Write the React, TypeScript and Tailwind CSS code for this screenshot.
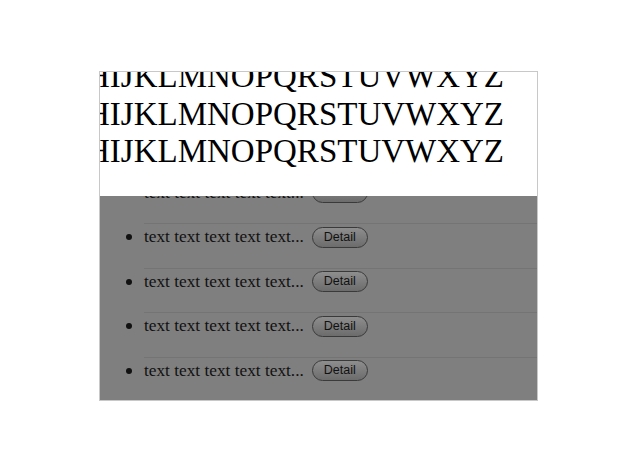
const ALPHABET = 'ABCDEFGHIJKLMNOPQRSTUVWXYZ';

const items = [1, 2, 3, 4, 5];

export default function App() {
  return (
    <div className="w-[640px] h-[476px] bg-white pt-[71px] pl-[99px]">
      <div className="w-[439px] h-[330px] border border-[#c8c8c8] flex flex-col overflow-hidden">
        {/* header: text scrolled both ways */}
        <div className="h-[124px] bg-white overflow-hidden shrink-0">
          <div
            className="mt-[-14px] ml-[-168px] whitespace-nowrap text-black text-[33px] leading-[37.5px]"
            style={{ fontFamily: '"Liberation Serif", "Times New Roman", serif' }}
          >
            <div>{ALPHABET}</div>
            <div>{ALPHABET}</div>
            <div>{ALPHABET}</div>
          </div>
        </div>

        {/* dimmed list */}
        <div className="flex-1 bg-[#7f7f7f] overflow-hidden">
          <ul className="mt-[-16.5px]">
            {items.map((i) => (
              <li key={i} className="flex">
                <div className="w-[44px] shrink-0 flex justify-end pr-[12px] pt-[10px]">
                  <span className="w-[6px] h-[6px] rounded-full bg-[#111]" />
                </div>
                <div className="flex-1 border-b border-[#747474] pt-[2.5px] pb-[20px]">
                  <div className="flex items-center h-[21px]">
                    <span
                      className="text-[17.3px] text-[#111] whitespace-nowrap"
                      style={{ fontFamily: '"Liberation Serif", "Times New Roman", serif' }}
                    >
                      text text text text text...
                    </span>
                    <button
                      className="ml-[8px] w-[56px] h-[21px] rounded-full border border-[#3a3a3a] bg-gradient-to-b from-[#8e8e8e] to-[#6c6c6c] text-[12.5px] text-[#111] flex items-center justify-center"
                      style={{ fontFamily: '"Liberation Sans", Arial, sans-serif' }}
                    >
                      Detail
                    </button>
                  </div>
                </div>
              </li>
            ))}
          </ul>
        </div>
      </div>
    </div>
  );
}
